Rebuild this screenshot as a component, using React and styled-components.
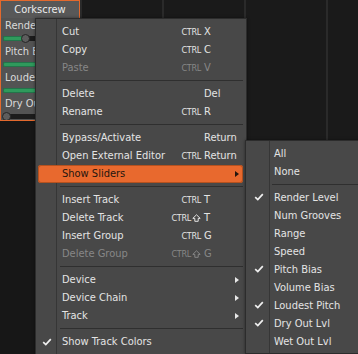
import React from "react";
import styled, { createGlobalStyle } from "styled-components";

const GlobalStyle = createGlobalStyle`
  html, body {
    margin: 0;
    padding: 0;
    background: #171717;
  }
  body {
    font-family: "DejaVu Sans Condensed", "Liberation Sans", sans-serif;
    font-size: 11px;
    -webkit-font-smoothing: antialiased;
  }
`;

const Screen = styled.div`
  position: relative;
  width: 358px;
  height: 354px;
  overflow: hidden;
  display: flex;
  background: #171717;
`;

const TrackColumn = styled.div`
  flex: none;
  width: 80px;
`;

const EmptyCell = styled.div`
  flex: none;
  width: 80px;
  border-left: 2px solid #2a2a2a;
  background: #1a1a1a;
`;

const Device = styled.div`
  width: 80px;
  height: 121px;
  box-sizing: border-box;
  overflow: hidden;
  border: 1px solid #e3692d;
  background: #535353;
`;

const DeviceTitle = styled.div`
  height: 17px;
  line-height: 17px;
  text-align: center;
  color: #ededed;
  background: #585858;
`;

const Param = styled.div`
  height: 26px;
  padding: 0 2px;
`;

const ParamLabel = styled.div`
  height: 15px;
  line-height: 15px;
  padding-left: 2px;
  color: #dadada;
  white-space: nowrap;
  overflow: hidden;
`;

const Track = styled.div`
  position: relative;
  height: 5px;
  margin-top: 2.5px;
  background: #1c1c1c;
  border-radius: 2px;
`;

const Fill = styled.div`
  height: 100%;
  background: #2f9a5c;
  border-radius: 2px;
  box-shadow: inset 0 0 0 1px #23744a;
`;

const Knob = styled.div`
  position: absolute;
  top: -2px;
  width: 7px;
  height: 7px;
  border-radius: 50%;
  background: #5d5d5d;
  border: 1px solid #262626;
  box-sizing: content-box;
  margin-left: -1px;
`;

const Menu = styled.div`
  position: absolute;
  left: ${(p) => p.$left}px;
  top: ${(p) => p.$top}px;
  width: ${(p) => p.$width}px;
  box-sizing: border-box;
  padding: ${(p) => p.$padTop}px 0 3px;
  background: #484848;
  border: 1px solid #2c2c2c;
  box-shadow: 0 0 3px rgba(0, 0, 0, 0.45);

  &::before {
    content: "";
    position: absolute;
    top: 0;
    bottom: 0;
    left: ${(p) => p.$gutter}px;
    width: 1px;
    background: #363636;
  }
`;

const Row = styled.div`
  position: relative;
  display: grid;
  grid-template-columns: ${(p) => p.$gutter - 2}px 1fr auto 39px;
  align-items: center;
  height: 18px;
  margin: 0 3px 0 2px;
  border-radius: 3px;
  white-space: nowrap;
  color: ${(p) => (p.$disabled ? "#878787" : p.$active ? "#24160e" : "#e4e4e4")};
  background: ${(p) => (p.$active ? "#e8692e" : "transparent")};
  box-shadow: ${(p) => (p.$active ? "inset 0 0 0 1px #b4511f" : "none")};
`;

const CheckCell = styled.div`
  display: flex;
  justify-content: center;
  align-items: center;
`;

const Label = styled.span`
  padding-left: ${(p) => p.$pad}px;
`;

const Modifier = styled.span`
  display: flex;
  align-items: center;
  gap: 1px;
  padding-right: 3px;
  font-size: 9px;
  letter-spacing: -0.3px;
`;

const Key = styled.span`
  display: flex;
  align-items: center;
  justify-content: ${(p) => (p.$arrow ? "flex-end" : "flex-start")};
  padding-right: 4px;
`;

const Arrow = styled.span`
  width: 0;
  height: 0;
  border-top: 3.5px solid transparent;
  border-bottom: 3.5px solid transparent;
  border-left: 4.5px solid ${(p) => (p.$dark ? "#24160e" : "#e8e8e8")};
`;

const Separator = styled.div`
  height: 8px;
  display: flex;
  align-items: center;
  margin: 0 3px 0 ${(p) => p.$indent}px;

  &::after {
    content: "";
    flex: 1;
    height: 1px;
    background: #2f2f2f;
  }
`;

const Check = () => (
  <svg width="10" height="8" viewBox="0 0 10 8">
    <polyline
      points="1.2,4.2 3.8,6.6 8.8,1.2"
      fill="none"
      stroke="#f0f0f0"
      strokeWidth="1.7"
    />
  </svg>
);

const Shift = () => (
  <svg width="9" height="8" viewBox="0 0 9 8">
    <path
      d="M4.5 0.8 L8.2 4.4 L6.2 4.4 L6.2 7.3 L2.8 7.3 L2.8 4.4 L0.8 4.4 Z"
      fill="none"
      stroke="currentColor"
      strokeWidth="1"
      strokeLinejoin="round"
    />
  </svg>
);

const params = [
  { name: "Render Level", value: 0.28 },
  { name: "Pitch Bias", value: 0.6 },
  { name: "Loudest Pitch", value: 0.6 },
  { name: "Dry Out Lvl", value: 0 },
];

const mainItems = [
  { label: "Cut", mod: "CTRL", key: "X" },
  { label: "Copy", mod: "CTRL", key: "C" },
  { label: "Paste", mod: "CTRL", key: "V", disabled: true },
  "sep",
  { label: "Delete", key: "Del" },
  { label: "Rename", mod: "CTRL", key: "R" },
  "sep",
  { label: "Bypass/Activate", key: "Return" },
  { label: "Open External Editor", mod: "CTRL", key: "Return" },
  { label: "Show Sliders", sub: true, active: true },
  "sep",
  { label: "Insert Track", mod: "CTRL", key: "T" },
  { label: "Delete Track", mod: "CTRL", shift: true, key: "T" },
  { label: "Insert Group", mod: "CTRL", key: "G" },
  { label: "Delete Group", mod: "CTRL", shift: true, key: "G", disabled: true },
  "sep",
  { label: "Device", sub: true },
  { label: "Device Chain", sub: true },
  { label: "Track", sub: true },
  "sep",
  { label: "Show Track Colors", checked: true },
];

const sliderItems = [
  { label: "All" },
  { label: "None" },
  "sep",
  { label: "Render Level", checked: true },
  { label: "Num Grooves" },
  { label: "Range" },
  { label: "Speed" },
  { label: "Pitch Bias", checked: true },
  { label: "Volume Bias" },
  { label: "Loudest Pitch", checked: true },
  { label: "Dry Out Lvl", checked: true },
  { label: "Wet Out Lvl" },
];

const MenuList = ({ items, left, top, width, gutter, pad, padTop }) => (
  <Menu $left={left} $top={top} $width={width} $gutter={gutter} $padTop={padTop}>
    {items.map((item, i) =>
      item === "sep" ? (
        <Separator key={i} $indent={gutter + pad - 2} />
      ) : (
        <Row key={i} $gutter={gutter} $disabled={item.disabled} $active={item.active}>
          <CheckCell>{item.checked && <Check />}</CheckCell>
          <Label $pad={pad}>{item.label}</Label>
          <Modifier>
            {item.mod}
            {item.shift && <Shift />}
          </Modifier>
          <Key $arrow={item.sub}>
            {item.sub ? <Arrow $dark={item.active} /> : item.key}
          </Key>
        </Row>
      )
    )}
  </Menu>
);

export default function App() {
  return (
    <>
      <GlobalStyle />
      <Screen>
        <TrackColumn>
          <Device>
            <DeviceTitle>Corkscrew</DeviceTitle>
            {params.map((p) => (
              <Param key={p.name}>
                <ParamLabel>{p.name}</ParamLabel>
                <Track>
                  <Fill style={{ width: `${p.value * 100}%` }} />
                  <Knob style={{ left: `calc(${p.value} * (100% - 7px))` }} />
                </Track>
              </Param>
            ))}
          </Device>
        </TrackColumn>
        <EmptyCell />
        <EmptyCell />
        <EmptyCell />
        <EmptyCell />

        <MenuList
          items={mainItems}
          left={35}
          top={18}
          width={212}
          gutter={20}
          pad={6}
          padTop={3.5}
        />
        <MenuList
          items={sliderItems}
          left={245}
          top={140}
          width={125}
          gutter={23}
          pad={5}
          padTop={3}
        />
      </Screen>
    </>
  );
}
